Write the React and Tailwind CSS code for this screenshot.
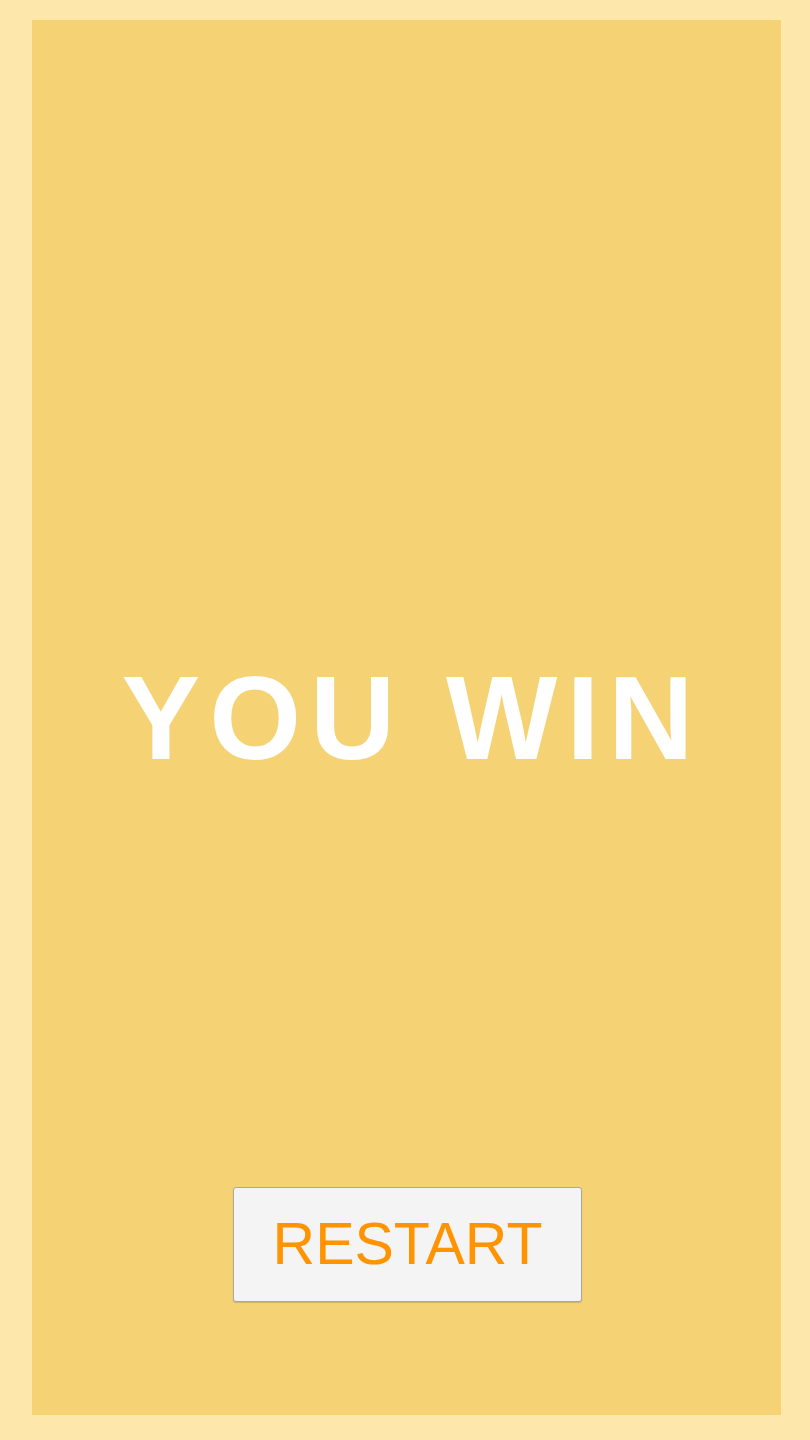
export default function App() {
  return (
    <div className="w-[810px] h-[1440px] bg-[#fde7ab] pt-[20px] pb-[25px] pl-[32px] pr-[29px] font-['Liberation_Sans',Arial,sans-serif]">
      <div className="h-full bg-[#f5d274] flex flex-col">
        {/* spacer mirrors the button block so the title stays centred */}
        <div className="h-[228px] shrink-0" />
        <div className="flex-1 flex items-center justify-center">
          <h1 className="text-white text-[118px] leading-none font-bold tracking-[9px] pl-[11px]">
            YOU WIN
          </h1>
        </div>
        <div className="h-[228px] shrink-0 flex justify-center">
          <button className="w-[349px] h-[115px] ml-[2px] bg-[#f4f4f4] border border-[#a8a8a0] rounded-[3px] text-[#ff9300] text-[59px] leading-none shadow-[0_1px_1px_rgba(0,0,0,0.15)]">
            RESTART
          </button>
        </div>
      </div>
    </div>
  )
}
